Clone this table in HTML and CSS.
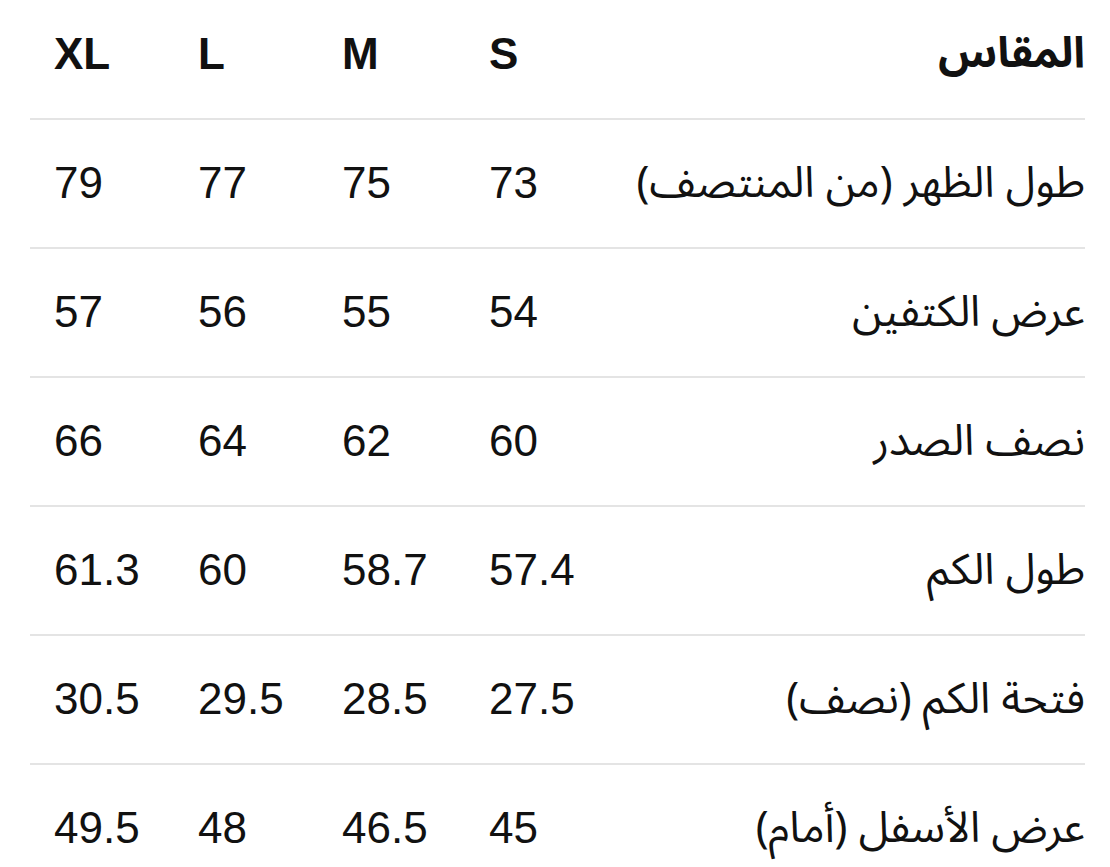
FILE: index.html
```html
<!DOCTYPE html>
<html lang="ar" dir="rtl">
<head>
<meta charset="utf-8">
<title>جدول المقاسات</title>
<link rel="stylesheet" href="styles.css">
</head>
<body>
<table class="sizes">
  <colgroup>
    <col class="col-label">
    <col class="col-s">
    <col class="col-m">
    <col class="col-l">
    <col class="col-xl">
  </colgroup>
  <thead>
    <tr>
      <th class="label">المقاس</th>
      <th class="val">S</th>
      <th class="val">M</th>
      <th class="val">L</th>
      <th class="val">XL</th>
    </tr>
  </thead>
  <tbody>
    <tr><td class="label">طول الظهر (من المنتصف)</td><td class="val">73</td><td class="val">75</td><td class="val">77</td><td class="val">79</td></tr>
    <tr><td class="label">عرض الكتفين</td><td class="val">54</td><td class="val">55</td><td class="val">56</td><td class="val">57</td></tr>
    <tr><td class="label">نصف الصدر</td><td class="val">60</td><td class="val">62</td><td class="val">64</td><td class="val">66</td></tr>
    <tr><td class="label">طول الكم</td><td class="val">57.4</td><td class="val">58.7</td><td class="val">60</td><td class="val">61.3</td></tr>
    <tr><td class="label">فتحة الكم (نصف)</td><td class="val">27.5</td><td class="val">28.5</td><td class="val">29.5</td><td class="val">30.5</td></tr>
    <tr><td class="label">عرض الأسفل (أمام)</td><td class="val">45</td><td class="val">46.5</td><td class="val">48</td><td class="val">49.5</td></tr>
  </tbody>
</table>
</body>
</html>
```

FILE: styles.css
```css
html, body {
  margin: 0;
  padding: 0;
  background: #ffffff;
}

body {
  padding: 0 25px 0 30px;
  overflow: hidden;
  height: 867px;
}

.sizes {
  width: 1055px;
  border-collapse: collapse;
  table-layout: fixed;
  margin-top: -10px;
  color: #111111;
  font-family: "Liberation Sans", Arial, sans-serif;
  font-size: 44px;
}

.col-label { width: 473px; }
.col-s { width: 147px; }
.col-m { width: 147px; }
.col-l { width: 144px; }
.col-xl { width: 144px; }

.sizes th,
.sizes td {
  height: 129px;
  padding: 0 0 1px 0;
  vertical-align: middle;
  border-bottom: 2px solid #e4e4e4;
  font-weight: normal;
  line-height: 1;
  box-sizing: border-box;
}

.sizes th {
  font-weight: bold;
}

.label {
  text-align: right;
  font-family: "Noto Sans Arabic", "DejaVu Sans", sans-serif;
  font-size: 43px;
}

.val {
  direction: ltr;
  text-align: left;
  padding-left: 24px !important;
}
```
